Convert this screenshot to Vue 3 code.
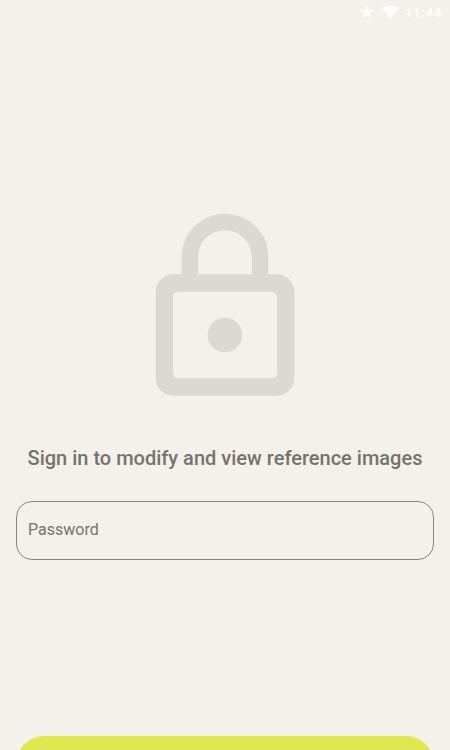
<template>
    <div class="login-page">
        <div class="status-bar">
            <svg class="star" viewBox="0 0 24 24"><path d="M12 17.27 18.18 21l-1.64-7.03L22 9.24l-7.19-.61L12 2 9.19 8.63 2 9.24l5.46 4.73L5.82 21z" /></svg>
            <svg class="wifi" viewBox="0 0 24 24"><path d="M12 21 24 6C23.6 5.7 18.9 2 12 2S.4 5.7 0 6z" /></svg>
            <span class="clock">11:44</span>
        </div>

        <div class="lock-wrap">
            <svg class="lock" viewBox="0 0 24 24">
                <path fill-rule="evenodd" d="M12 17c1.1 0 2-.9 2-2s-.9-2-2-2-2 .9-2 2 .9 2 2 2zm6-9h-1V6c0-2.76-2.24-5-5-5S7 3.24 7 6v2H6c-1.1 0-2 .9-2 2v10c0 1.1.9 2 2 2h12c1.1 0 2-.9 2-2V10c0-1.1-.9-2-2-2zM8.9 6c0-1.71 1.39-3.1 3.1-3.1s3.1 1.39 3.1 3.1v2H8.9V6zM6.6 10h10.8c.33 0 .6.27.6.6v8.8c0 .33-.27.6-.6.6H6.6c-.33 0-.6-.27-.6-.6v-8.8c0-.33.27-.6.6-.6z" />
            </svg>
        </div>

        <p class="message">Sign in to modify and view reference images</p>

        <div class="password-box">
            <span class="placeholder">Password</span>
        </div>

        <button class="submit" aria-label="Sign in"></button>
    </div>
</template>

<script setup>
</script>

<style>
html,
body {
    margin: 0;
    background: #f4f1ea;
}
</style>

<style scoped>
.login-page {
    width: 450px;
    height: 750px;
    overflow: hidden;
    background: #f4f1ea;
    font-family: Roboto, "Liberation Sans", sans-serif;
    display: flex;
    flex-direction: column;
}

.status-bar {
    height: 24px;
    flex: none;
    display: flex;
    align-items: center;
    justify-content: flex-end;
    padding-right: 8px;
    color: #fff;
}

.star {
    width: 16px;
    height: 16px;
    fill: #fff;
    margin-right: 7px;
}

.wifi {
    width: 17px;
    height: 17px;
    fill: #fff;
    margin-right: 7px;
}

.clock {
    font-size: 13px;
    font-weight: 700;
    letter-spacing: 0.6px;
}

.lock-wrap {
    flex: none;
    display: flex;
    justify-content: center;
    margin-top: 181px;
}

.lock {
    width: 208px;
    height: 208px;
    fill: #dcd9d2;
}

.message {
    flex: none;
    margin: 33px 0 0;
    text-align: center;
    font-size: 20px;
    line-height: 24px;
    font-weight: 500;
    color: #76736c;
}

.password-box {
    flex: none;
    box-sizing: border-box;
    margin: 31px 16px 0;
    height: 59px;
    border: 1px solid #8a867c;
    border-radius: 16px;
    display: flex;
    align-items: center;
    padding: 0 0 2px 11px;
}

.placeholder {
    font-size: 16px;
    color: #76736c;
}

.submit {
    flex: none;
    height: 56px;
    margin: 176px 16px 0;
    border: none;
    border-radius: 28px;
    background: #dfe94f;
}
</style>
